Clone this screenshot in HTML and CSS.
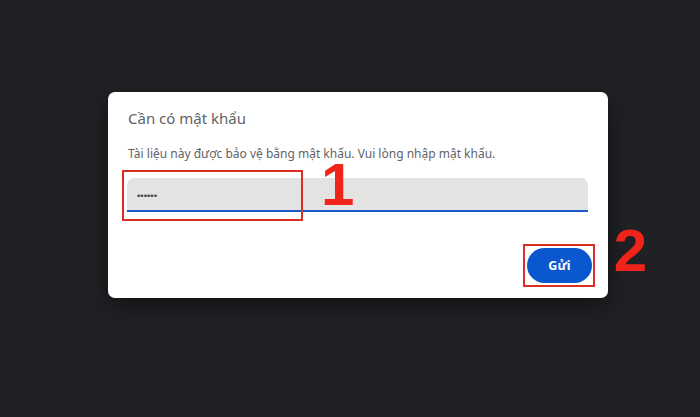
FILE: index.html
```html
<!DOCTYPE html>
<html lang="vi">

<head>
  <meta charset="utf-8">
  <link rel="stylesheet" href="styles.css">
</head>

<body>

  <div class="dialog">
    <h2 class="dialog-title">Cần có mật khẩu</h2>
    <p class="dialog-text">Tài liệu này được bảo vệ bằng mật khẩu. Vui lòng nhập mật khẩu.</p>
    <div class="field">
      <input type="password" class="field-input" value="123456">
      <span class="mark mark-field"></span>
      <span class="step step-one">1</span>
    </div>
    <div class="actions">
      <button class="button primary">Gửi</button>
      <span class="mark mark-button"></span>
      <span class="step step-two">2</span>
    </div>
  </div>

</body>

</html>
```

FILE: styles.css
```css
html, body {
  margin: 0;
  height: 100%;
}

body {
  background-color: #202124;
  font-family: "Noto Sans", "Open Sans", sans-serif;
  padding: 92px 0 0 108px;
  box-sizing: border-box;
}

.dialog {
  width: 500px;
  height: 206px;
  box-sizing: border-box;
  background-color: white;
  border-radius: 7px;
  padding: 14px 20px 0 20px;
  box-shadow: 0 8px 24px rgba(0, 0, 0, 0.45);
}

.dialog-title {
  margin: 0;
  font-size: 15px;
  font-weight: normal;
  color: #5f6368;
  line-height: 24px;
}

.dialog-text {
  margin: 16px 0 0 0;
  font-size: 12px;
  color: #5f6368;
  line-height: 16px;
}

.field {
  position: relative;
  margin: 16px 0 0 -1px;
  width: 461px;
}

.field-input {
  display: block;
  width: 100%;
  height: 34px;
  box-sizing: border-box;
  border: 0;
  border-bottom: 2px solid #1a5bc8;
  border-radius: 7px 7px 0 0;
  background-color: #e3e3e1;
  padding: 2px 10px 0 10px;
  font-size: 9.5px;
  color: #3c4043;
  outline: none;
}

.actions {
  position: relative;
  display: flex;
  justify-content: flex-end;
  margin: 36px -4px 0 0;
}

.button {
  border: 0;
  cursor: pointer;
  font-family: inherit;
}

.primary {
  width: 65px;
  height: 35px;
  border-radius: 18px;
  background-color: #0b57d0;
  color: white;
  font-size: 12.5px;
  font-weight: bold;
}

/* annotation overlays */
.mark {
  position: absolute;
  border: 2px solid #d93025;
  box-sizing: border-box;
}

.mark-field {
  left: -5px;
  top: -8px;
  width: 181px;
  height: 51px;
}

.mark-button {
  right: -3px;
  top: -4px;
  width: 72px;
  height: 43px;
}

.step {
  position: absolute;
  color: #f0241a;
  font-family: "Liberation Sans", sans-serif;
  font-weight: bold;
  font-size: 60px;
  line-height: 44px;
}

.step-one {
  left: 194px;
  top: -15px;
}

.step-two {
  right: -55px;
  top: -19px;
}
```
